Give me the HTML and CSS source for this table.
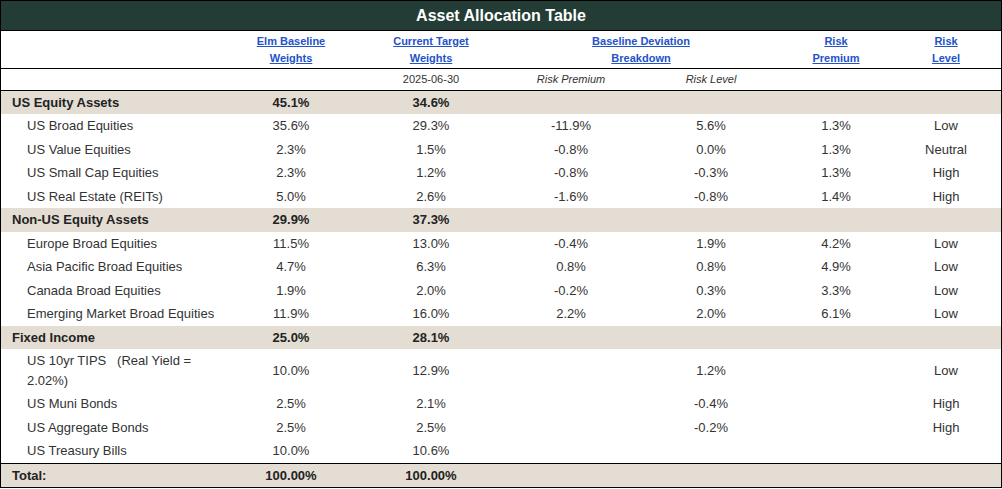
FILE: index.html
```html
<!DOCTYPE html>
<html>
<head>
<meta charset="utf-8">
<link rel="stylesheet" href="styles.css">
</head>
<body>
<div class="panel">
  <div class="title">Asset Allocation Table</div>
  <table class="alloc">
    <colgroup>
      <col class="c-name"><col class="c-num"><col class="c-num"><col class="c-num"><col class="c-num"><col class="c-sm"><col class="c-sm">
    </colgroup>
    <thead>
      <tr class="head">
        <th></th>
        <th><a href="#">Elm Baseline<br>Weights</a></th>
        <th><a href="#">Current Target<br>Weights</a></th>
        <th colspan="2"><a href="#">Baseline Deviation<br>Breakdown</a></th>
        <th><a href="#">Risk<br>Premium</a></th>
        <th><a href="#">Risk<br>Level</a></th>
      </tr>
      <tr class="sub">
        <td></td>
        <td></td>
        <td>2025-06-30</td>
        <td><em>Risk Premium</em></td>
        <td><em>Risk Level</em></td>
        <td></td>
        <td></td>
      </tr>
    </thead>
    <tbody>
      <tr class="cat"><td class="name">US Equity Assets</td><td>45.1%</td><td>34.6%</td><td></td><td></td><td></td><td></td></tr>
      <tr><td class="name">US Broad Equities</td><td>35.6%</td><td>29.3%</td><td>-11.9%</td><td>5.6%</td><td>1.3%</td><td>Low</td></tr>
      <tr><td class="name">US Value Equities</td><td>2.3%</td><td>1.5%</td><td>-0.8%</td><td>0.0%</td><td>1.3%</td><td>Neutral</td></tr>
      <tr><td class="name">US Small Cap Equities</td><td>2.3%</td><td>1.2%</td><td>-0.8%</td><td>-0.3%</td><td>1.3%</td><td>High</td></tr>
      <tr><td class="name">US Real Estate (REITs)</td><td>5.0%</td><td>2.6%</td><td>-1.6%</td><td>-0.8%</td><td>1.4%</td><td>High</td></tr>
      <tr class="cat"><td class="name">Non-US Equity Assets</td><td>29.9%</td><td>37.3%</td><td></td><td></td><td></td><td></td></tr>
      <tr><td class="name">Europe Broad Equities</td><td>11.5%</td><td>13.0%</td><td>-0.4%</td><td>1.9%</td><td>4.2%</td><td>Low</td></tr>
      <tr><td class="name">Asia Pacific Broad Equities</td><td>4.7%</td><td>6.3%</td><td>0.8%</td><td>0.8%</td><td>4.9%</td><td>Low</td></tr>
      <tr><td class="name">Canada Broad Equities</td><td>1.9%</td><td>2.0%</td><td>-0.2%</td><td>0.3%</td><td>3.3%</td><td>Low</td></tr>
      <tr><td class="name nowrap">Emerging Market Broad Equities</td><td>11.9%</td><td>16.0%</td><td>2.2%</td><td>2.0%</td><td>6.1%</td><td>Low</td></tr>
      <tr class="cat"><td class="name">Fixed Income</td><td>25.0%</td><td>28.1%</td><td></td><td></td><td></td><td></td></tr>
      <tr><td class="name">US 10yr TIPS&nbsp;&nbsp;&nbsp;(Real Yield = 2.02%)</td><td>10.0%</td><td>12.9%</td><td></td><td>1.2%</td><td></td><td>Low</td></tr>
      <tr><td class="name">US Muni Bonds</td><td>2.5%</td><td>2.1%</td><td></td><td>-0.4%</td><td></td><td>High</td></tr>
      <tr><td class="name">US Aggregate Bonds</td><td>2.5%</td><td>2.5%</td><td></td><td>-0.2%</td><td></td><td>High</td></tr>
      <tr><td class="name">US Treasury Bills</td><td>10.0%</td><td>10.6%</td><td></td><td></td><td></td><td></td></tr>
    </tbody>
    <tfoot>
      <tr class="cat total"><td class="name">Total:</td><td>100.00%</td><td>100.00%</td><td></td><td></td><td></td><td></td></tr>
    </tfoot>
  </table>
</div>
</body>
</html>
```

FILE: styles.css
```css
html, body {
  margin: 0;
  padding: 0;
  background: #ffffff;
}

body {
  font-family: "Liberation Sans", Arial, Helvetica, sans-serif;
  color: #333333;
}

.panel {
  width: 1002px;
  box-sizing: border-box;
  border: 1px solid #000000;
}

.title {
  height: 29px;
  line-height: 29px;
  background: #233d36;
  color: #ffffff;
  font-size: 16px;
  font-weight: bold;
  text-align: center;
}

.alloc {
  width: 1000px;
  table-layout: fixed;
  border-collapse: collapse;
  border-spacing: 0;
}

.c-name { width: 220px; }
.c-num { width: 140px; }
.c-sm { width: 110px; }

.alloc th,
.alloc td {
  padding: 2px 0;
  text-align: center;
  vertical-align: middle;
  font-size: 13px;
  line-height: 19.5px;
  font-weight: normal;
}

.alloc .head th {
  font-size: 11px;
  line-height: 16.5px;
  font-weight: bold;
  border-top: 1px solid #000000;
  border-bottom: 1px solid #000000;
}

.alloc .head a {
  color: #2452c9;
  text-decoration: underline;
}

.alloc .sub td {
  font-size: 11px;
  line-height: 16.5px;
  color: #333333;
  border-bottom: 1px solid #000000;
}

.alloc .sub em {
  font-style: italic;
}

.alloc td.name {
  text-align: left;
  padding-left: 26px;
  padding-right: 0;
}

.alloc td.nowrap {
  white-space: nowrap;
}

.alloc .cat td {
  background: #e4ddd3;
  font-weight: bold;
  color: #222222;
}

.alloc .cat td.name {
  padding-left: 11px;
}

.alloc .total td {
  border-top: 1px solid #000000;
}
```
